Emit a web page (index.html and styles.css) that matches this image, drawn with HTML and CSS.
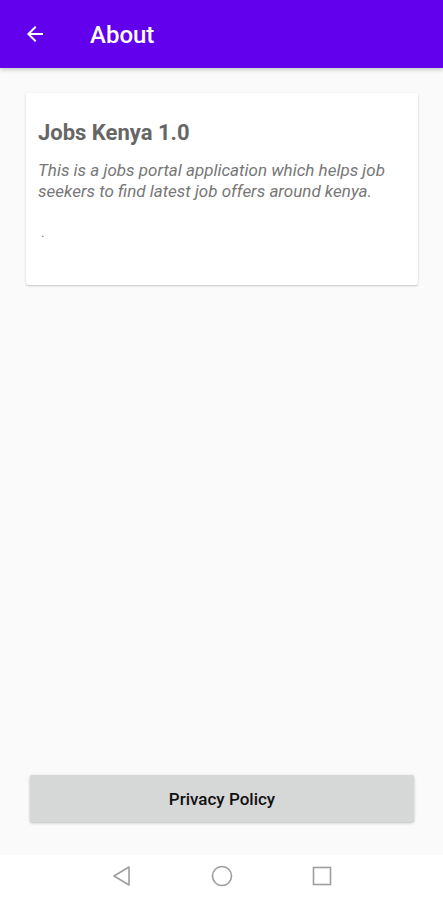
FILE: index.html
```html
<!DOCTYPE html>
<html lang="en">
<head>
  <meta charset="UTF-8" />
  <title>About</title>
  <link rel="stylesheet" href="styles.css">
</head>
<body>
  <div class="screen">
    <div class="appbar">
      <svg class="back" width="24" height="24" viewBox="0 0 24 24">
        <path d="M20 11H7.83l5.59-5.59L12 4l-8 8 8 8 1.41-1.41L7.83 13H20v-2z" fill="#fff"/>
      </svg>
      <span class="appbar-title">About</span>
    </div>

    <div class="content">
      <div class="card">
        <h3 class="card-title">Jobs Kenya 1.0</h3>
        <p class="card-text">This is a jobs portal application which helps job seekers to find latest job offers around kenya.</p>
        <p class="card-dot">.</p>
      </div>
    </div>

    <div class="bottom">
      <button class="btn">Privacy Policy</button>
    </div>

    <div class="navbar">
      <svg width="20" height="22" viewBox="0 0 20 22">
        <path d="M17 2 L2 11 L17 20 Z" fill="none" stroke="#9e9e9e" stroke-width="1.6" stroke-linejoin="round"/>
      </svg>
      <svg width="22" height="22" viewBox="0 0 22 22">
        <circle cx="11" cy="11" r="9.5" fill="none" stroke="#9e9e9e" stroke-width="1.6"/>
      </svg>
      <svg width="20" height="20" viewBox="0 0 20 20">
        <rect x="1.5" y="1.5" width="17" height="17" fill="none" stroke="#9e9e9e" stroke-width="1.6"/>
      </svg>
    </div>
  </div>
</body>
</html>
```

FILE: styles.css
```css
html, body { margin: 0; padding: 0; }
body { font-family: Roboto, "Liberation Sans", sans-serif; background: #fafafa; }

.screen { display: flex; flex-direction: column; height: 900px; }

.appbar {
  height: 68px;
  background: #6200ee;
  display: flex;
  align-items: center;
  padding-left: 23px;
  box-shadow: 0 2px 4px rgba(0,0,0,0.2);
  flex-shrink: 0;
}
.back { margin-top: 0; }
.appbar-title {
  color: #fff;
  font-size: 24px;
  font-weight: 500;
  margin-left: 43px;
  margin-top: 2px;
}

.content { flex: 1; padding: 25px 25px 0 26px; }
.card {
  background: #fff;
  height: 192px;
  box-sizing: border-box;
  padding: 27px 12px 0 12px;
  border-radius: 2px;
  box-shadow: 0 1px 2px rgba(0,0,0,0.22);
}
.card-title {
  margin: 0;
  font-size: 22px;
  font-weight: 700;
  color: #666;
  line-height: 26px;
}
.card-text {
  margin: 14px 0 0;
  font-size: 17px;
  font-style: italic;
  color: #777;
  line-height: 21px;
}
.card-dot {
  margin: 20px 0 0 3px;
  font-size: 14px;
  color: #888;
  line-height: 20px;
}

.bottom { padding: 0 29px 33px 30px; }
.btn {
  width: 100%;
  height: 47px;
  border: none;
  border-radius: 2px;
  background: #d6d7d7;
  font-family: Roboto, "Liberation Sans", sans-serif;
  font-size: 17px;
  font-weight: 500;
  color: #111;
  box-shadow: 0 1px 3px rgba(0,0,0,0.25);
}

.navbar {
  height: 45px;
  box-sizing: border-box;
  padding-bottom: 3px;
  background: #fff;
  display: flex;
  align-items: center;
  justify-content: center;
  gap: 79px;
  flex-shrink: 0;
}
```
